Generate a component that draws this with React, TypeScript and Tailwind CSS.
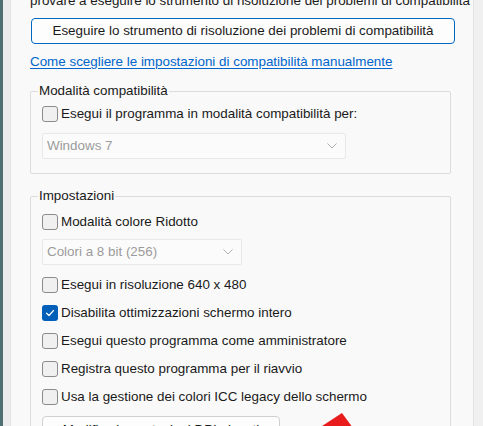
import React from "react";

function Box({ checked = false }: { checked?: boolean }) {
  if (checked) {
    return (
      <span className="w-[16px] h-[16px] rounded-[3px] bg-[#005fb8] flex items-center justify-center shrink-0">
        <svg width="10" height="10" viewBox="0 0 10 10" fill="none">
          <path d="M1.5 5.2 L4 7.5 L8.5 2.5" stroke="white" strokeWidth="1.2" strokeLinecap="round" strokeLinejoin="round" />
        </svg>
      </span>
    );
  }
  return <span className="w-[16px] h-[16px] rounded-[3px] border border-[#8b8b8b] bg-[#f0f0f0] shrink-0" />;
}

function Check({ label, checked }: { label: string; checked?: boolean }) {
  return (
    <div className="flex items-center gap-[3px] h-[28px]">
      <Box checked={checked} />
      <span className="text-[#1a1a1a] whitespace-nowrap">{label}</span>
    </div>
  );
}

function Select({ label, w }: { label: string; w: string }) {
  return (
    <div className={`${w} h-[26px] border border-[#e8e8e8] bg-[#fbfbfb] rounded-[2px] flex items-center justify-between pl-[4px] pr-[8px] text-[#9b9b9b]`}>
      <span>{label}</span>
      <svg width="10" height="6" viewBox="0 0 10 6" fill="none">
        <path d="M0.5 0.5 L5 5 L9.5 0.5" stroke="#b0b0b0" strokeWidth="1" />
      </svg>
    </div>
  );
}

export default function App() {
  return (
    <div
      className="w-[483px] h-[426px] overflow-hidden flex text-[13.4px] leading-[20px]"
      style={{ fontFamily: '"Liberation Sans", Arial, sans-serif' }}
    >
      <div className="w-[3px] bg-[#4f6f72] shrink-0" />
      <div className="w-[7px] bg-[#ececec] shrink-0" />
      <div className="flex-1 bg-[#f9f9f9] border-l border-r border-[#e3e3e3] pl-[19px] pr-[22px] overflow-hidden">
        <div className="mt-[-9px] text-[#1a1a1a] whitespace-nowrap">
          provare a eseguire lo strumento di risoluzione dei problemi di compatibilità
        </div>
        <div className="mt-[7px] ml-[1px] h-[26px] w-[424px] border border-[#0067c0] rounded-[4px] bg-[#fdfdfd] flex items-center justify-center text-[#1a1a1a] whitespace-nowrap">
          Eseguire lo strumento di risoluzione dei problemi di compatibilità
        </div>
        <div className="mt-[8px] text-[#0066cc] underline underline-offset-[2px] whitespace-nowrap">
          Come scegliere le impostazioni di compatibilità manualmente
        </div>

        <div className="mt-[19px] relative w-[421px] border border-[#dcdcdc] rounded-[2px] pt-[8px] pb-[14px] pl-[11px]">
          <span className="absolute left-[7px] top-[-11px] bg-[#f9f9f9] px-[1px] text-[#1a1a1a]">Modalità compatibilità</span>
          <Check label="Esegui il programma in modalità compatibilità per:" />
          <div className="mt-[5px]">
            <Select label="Windows 7" w="w-[304px]" />
          </div>
        </div>

        <div className="mt-[22px] relative w-[421px] h-[400px] border border-[#dcdcdc] rounded-[2px] pt-[11px] pl-[11px]">
          <span className="absolute left-[7px] top-[-11px] bg-[#f9f9f9] px-[1px] text-[#1a1a1a]">Impostazioni</span>
          <Check label="Modalità colore Ridotto" />
          <div className="mt-[3px] mb-[6px]">
            <Select label="Colori a 8 bit (256)" w="w-[200px]" />
          </div>
          <Check label="Esegui in risoluzione 640 x 480" />
          <Check label="Disabilita ottimizzazioni schermo intero" checked />
          <Check label="Esegui questo programma come amministratore" />
          <Check label="Registra questo programma per il riavvio" />
          <Check label="Usa la gestione dei colori ICC legacy dello schermo" />
          <div className="mt-[5px] flex items-start">
            <div className="w-[238px] h-[28px] border border-[#d0d0d0] rounded-[4px] bg-[#fdfdfd] flex items-center justify-center text-[#1a1a1a] whitespace-nowrap">
              Modifica impostazioni DPI elevati
            </div>
          </div>
          <svg className="absolute left-[288px] top-[215px]" width="40" height="16" viewBox="0 0 40 16">
            <polygon points="0,16 23,1 34,16" fill="#e81c1c" />
          </svg>
        </div>
      </div>
      <div className="w-[9px] bg-[#f0f0f0] shrink-0" />
    </div>
  );
}
